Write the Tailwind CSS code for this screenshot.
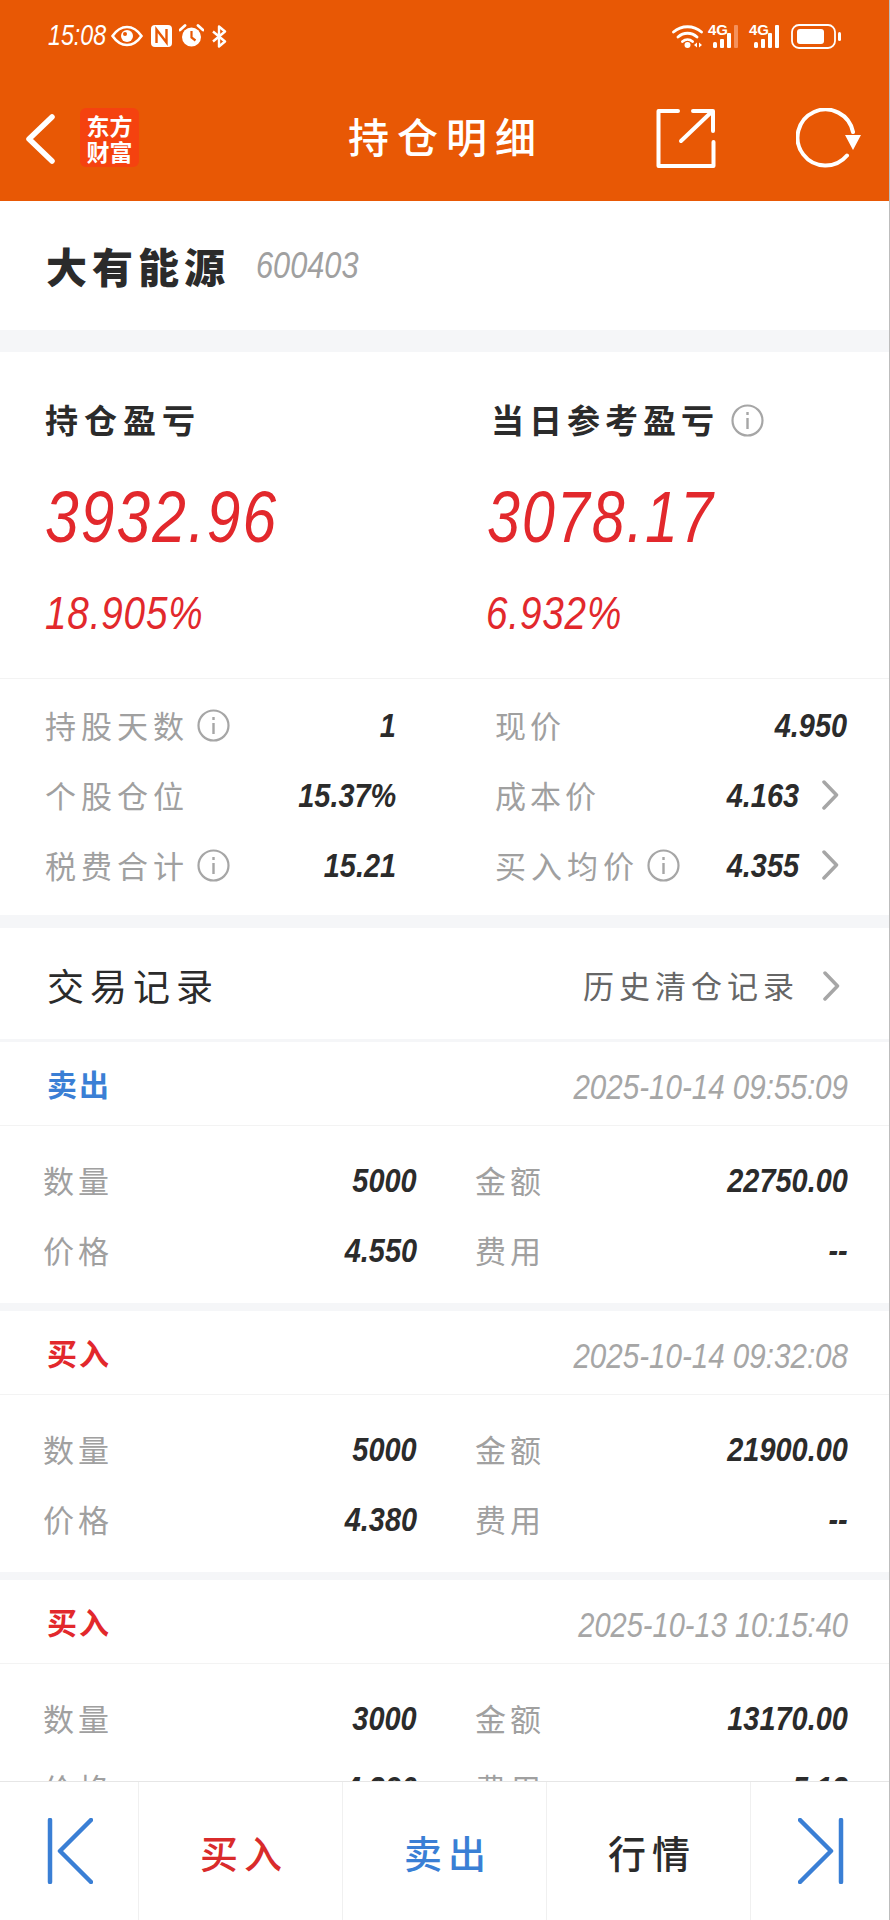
<!DOCTYPE html>
<html lang="zh-CN">
<head>
  <meta charset="UTF-8" />
  <title>持仓明细</title>
  <script src="https://cdn.jsdelivr.net/npm/@tailwindcss/browser@4"></script>
</head>
<body class="bg-white">
<div class="w-[890px] h-[1920px] flex flex-col overflow-hidden bg-white text-[#2b2b2b] border-r border-[#bdbdbd] font-['Noto_Sans_CJK_SC',sans-serif]">

  <!-- header -->
  <header class="h-[201px] shrink-0 bg-[#e85805] text-white flex flex-col">
    <div class="h-[72px] flex items-center pl-[48px] pr-[48px]">
      <span class="w-[60px] text-[29px] italic origin-left scale-x-[.8] font-['Liberation_Sans',sans-serif]">15:08</span>
      <svg class="ml-[3px]" width="32" height="22" viewBox="0 0 32 22" fill="none"><path d="M1.500 11C6 4.500 11 2 16 2s10 2.500 14.500 9C26 17.500 21 20 16 20S6 17.500 1.500 11Z" stroke="#fff" stroke-width="2.600"/><circle cx="16" cy="11" r="6" fill="#fff"/><circle cx="14" cy="9" r="2" fill="#e85805"/></svg>
      <svg class="ml-[8px]" width="21" height="22" viewBox="0 0 21 22" fill="none"><rect width="21" height="22" rx="4" fill="#fff"/><path d="M5.500 18V4.500l10 13V4" stroke="#e85805" stroke-width="2.400"/></svg>
      <svg class="ml-[7px]" width="25" height="24" viewBox="0 0 25 24" fill="none"><circle cx="12.500" cy="13" r="9.500" fill="#fff"/><path d="M12.500 7v6.500l4 3" stroke="#e85805" stroke-width="2.200"/><path d="M1 6l5-4.500M24 6l-5-4.500" stroke="#fff" stroke-width="2.800" stroke-linecap="round"/></svg>
      <svg class="ml-[7px]" width="16" height="23" viewBox="0 0 16 23" fill="none"><path d="M2 6.500l12 10-6 5V1.500l6 5-12 10" stroke="#fff" stroke-width="2.400" stroke-linejoin="round"/></svg>

      <svg class="ml-auto" width="31" height="24" viewBox="0 0 31 24" fill="none"><path d="M1.500 8C9.500 1 21.500 1 29.500 8M6 13c5.500-5 13.500-5 19 0M10.500 17.500c3-2.500 7-2.500 10 0" stroke="#fff" stroke-width="2.800" stroke-linecap="round"/><circle cx="15.500" cy="21" r="3" fill="#fff"/><path d="M22 21l3-2.500V23.500ZM30 21l-3-2.500V23.500Z" fill="#fff"/></svg>
      <div class="ml-[5px] relative w-[34px] h-[24px]">
        <span class="absolute left-0 -top-[3px] text-[15px] font-bold leading-[17px] font-['Liberation_Sans',sans-serif]">4G</span>
        <svg class="absolute left-0 top-0" width="34" height="24" viewBox="0 0 34 24"><g fill="#fff"><rect x="5" y="18" width="4" height="6" rx="1.500"/><rect x="12" y="15" width="4" height="9" rx="1"/><rect x="19" y="9" width="4" height="15" rx="1"/></g><rect x="26" y="1" width="4" height="23" rx="1" fill="#f5915c"/></svg>
      </div>
      <div class="ml-[7px] relative w-[34px] h-[24px]">
        <span class="absolute left-0 -top-[3px] text-[15px] font-bold leading-[17px] font-['Liberation_Sans',sans-serif]">4G</span>
        <svg class="absolute left-0 top-0" width="34" height="24" viewBox="0 0 34 24"><g fill="#fff"><rect x="5" y="18" width="4" height="6" rx="1.500"/><rect x="12" y="15" width="4" height="9" rx="1"/><rect x="19" y="9" width="4" height="15" rx="1"/><rect x="26" y="1" width="4" height="23" rx="1"/></g></svg>
      </div>
      <svg class="ml-[8px]" width="50" height="25" viewBox="0 0 50 25" fill="none"><rect x="1" y="1" width="43" height="23" rx="7" stroke="#fff" stroke-width="1.800"/><rect x="6" y="5" width="27" height="15" rx="3" fill="#fff"/><rect x="47" y="8" width="3" height="9" rx="1.500" fill="#fff"/></svg>
    </div>

    <div class="relative h-[129px] flex items-start pt-[36px]">
      <svg class="ml-[25px] mt-[6px]" width="30" height="50" viewBox="0 0 30 50" fill="none"><path d="M27 3L4 25l23 22" stroke="#fff" stroke-width="5.500" stroke-linecap="round" stroke-linejoin="round"/></svg>
      <div class="ml-[25px] w-[59px] h-[59px] rounded-[6px] bg-[#f5420f] flex flex-col items-center justify-center text-[23px] font-bold">
        <span class="h-[26px] leading-[26px]">东方</span>
        <span class="h-[26px] leading-[26px]">财富</span>
      </div>
      <h1 class="absolute left-[348px] top-[33px] text-[41px] leading-[60px] tracking-[8px] font-medium">持仓明细</h1>
      <svg class="ml-auto" width="60" height="60" viewBox="0 0 60 60" fill="none"><path d="M22 3H2.500v55h55V34M25 33L56 3.500M37 3h20v20" stroke="#fff" stroke-width="4" stroke-linecap="round" stroke-linejoin="round"/></svg>
      <svg class="ml-[80px] mr-[28px]" width="65" height="60" viewBox="0 0 65 60" fill="none"><path d="M57 24A28 28 0 1 0 51 47.500" stroke="#fff" stroke-width="4" stroke-linecap="round"/><path d="M49 27h16l-8 15Z" fill="#fff"/></svg>
    </div>
  </header>

  <!-- stock name -->
  <section class="h-[129px] shrink-0 flex items-center pl-[46px]">
    <span class="text-[41px] leading-none font-black tracking-[5px]">大有能源</span>
    <span class="ml-[26px] text-[37px] italic origin-left scale-x-[.83] text-[#a0a0a0] font-['Liberation_Sans',sans-serif]">600403</span>
  </section>
  <div class="h-[22px] shrink-0 bg-[#f5f6f8]"></div>

  <!-- profit summary -->
  <section class="shrink-0 h-[327px] grid grid-cols-[446px_1fr] pl-[45px] pt-[44px] border-b border-[#f3f3f3]">
    <div>
      <div class="h-[48px] flex items-center text-[33px] font-bold tracking-[6px]">持仓盈亏</div>
      <div class="mt-[25px] h-[96px] flex items-center origin-left scale-x-[.84] text-[72px] tracking-[2.500px] italic text-[#e2282c] font-['Liberation_Sans',sans-serif]">3932.96</div>
      <div class="mt-[18px] h-[60px] flex items-center origin-left scale-x-[.84] text-[46px] tracking-[1px] italic text-[#e2282c] font-['Liberation_Sans',sans-serif]">18.905%</div>
    </div>
    <div>
      <div class="h-[48px] flex items-center text-[33px] font-bold tracking-[5px]">当日参考盈亏
        <svg class="ml-[12px]" width="33" height="33" viewBox="0 0 33 33" fill="none"><circle cx="16.500" cy="16.500" r="15" stroke="#a6a6a6" stroke-width="2.200"/><path d="M16.500 14v11M16.500 8v3" stroke="#a6a6a6" stroke-width="2.400"/></svg>
      </div>
      <div class="-ml-[4px] mt-[25px] h-[96px] flex items-center origin-left scale-x-[.82] text-[72px] tracking-[2.500px] italic text-[#e2282c] font-['Liberation_Sans',sans-serif]">3078.17</div>
      <div class="-ml-[5px] mt-[18px] h-[60px] flex items-center origin-left scale-x-[.84] text-[46px] tracking-[1px] italic text-[#e2282c] font-['Liberation_Sans',sans-serif]">6.932%</div>
    </div>
  </section>

  <!-- position stats -->
  <section class="shrink-0 h-[236px] pt-[11px] pl-[45px] pr-[42px] grid grid-cols-[351px_1fr] gap-x-[99px] auto-rows-[70px] text-[#a0a0a0]">
    <div class="flex items-center">
      <span class="text-[31px] tracking-[5px]">持股天数</span>
      <svg class="ml-[8px]" width="33" height="33" viewBox="0 0 33 33" fill="none"><circle cx="16.500" cy="16.500" r="15" stroke="#a6a6a6" stroke-width="2.200"/><path d="M16.500 14v11M16.500 8v3" stroke="#a6a6a6" stroke-width="2.400"/></svg>
      <span class="ml-auto text-[34px] italic font-bold origin-right scale-x-[.85] text-[#2b2b2b] font-['Liberation_Sans',sans-serif]">1</span>
    </div>
    <div class="flex items-center">
      <span class="text-[31px] tracking-[4px]">现价</span>
      <span class="ml-auto text-[34px] italic font-bold origin-right scale-x-[.85] text-[#2b2b2b] font-['Liberation_Sans',sans-serif]">4.950</span>
    </div>
    <div class="flex items-center">
      <span class="text-[31px] tracking-[5px]">个股仓位</span>
      <span class="ml-auto text-[34px] italic font-bold origin-right scale-x-[.85] text-[#2b2b2b] font-['Liberation_Sans',sans-serif]">15.37%</span>
    </div>
    <div class="flex items-center">
      <span class="text-[31px] tracking-[4px]">成本价</span>
      <span class="ml-auto text-[34px] italic font-bold origin-right scale-x-[.85] text-[#2b2b2b] font-['Liberation_Sans',sans-serif]">4.163</span>
      <svg class="ml-[23px] mr-[8px]" width="17" height="30" viewBox="0 0 17 30" fill="none"><path d="M2 2l12.500 13L2 28" stroke="#a6a6a6" stroke-width="3.500" stroke-linecap="round" stroke-linejoin="round"/></svg>
    </div>
    <div class="flex items-center">
      <span class="text-[31px] tracking-[5px]">税费合计</span>
      <svg class="ml-[8px]" width="33" height="33" viewBox="0 0 33 33" fill="none"><circle cx="16.500" cy="16.500" r="15" stroke="#a6a6a6" stroke-width="2.200"/><path d="M16.500 14v11M16.500 8v3" stroke="#a6a6a6" stroke-width="2.400"/></svg>
      <span class="ml-auto text-[34px] italic font-bold origin-right scale-x-[.85] text-[#2b2b2b] font-['Liberation_Sans',sans-serif]">15.21</span>
    </div>
    <div class="flex items-center">
      <span class="text-[31px] tracking-[5px]">买入均价</span>
      <svg class="ml-[8px]" width="33" height="33" viewBox="0 0 33 33" fill="none"><circle cx="16.500" cy="16.500" r="15" stroke="#a6a6a6" stroke-width="2.200"/><path d="M16.500 14v11M16.500 8v3" stroke="#a6a6a6" stroke-width="2.400"/></svg>
      <span class="ml-auto text-[34px] italic font-bold origin-right scale-x-[.85] text-[#2b2b2b] font-['Liberation_Sans',sans-serif]">4.355</span>
      <svg class="ml-[23px] mr-[8px]" width="17" height="30" viewBox="0 0 17 30" fill="none"><path d="M2 2l12.500 13L2 28" stroke="#a6a6a6" stroke-width="3.500" stroke-linecap="round" stroke-linejoin="round"/></svg>
    </div>
  </section>
  <div class="h-[13px] shrink-0 bg-[#f5f6f8]"></div>

  <!-- trade records, clipped by the bottom bar -->
  <main class="flex-1 min-h-0 overflow-hidden">
    <div class="h-[114px] flex items-center pl-[47px] pr-[49px] border-b-[3px] border-[#f5f6f8]">
      <span class="mt-[4px] text-[37px] tracking-[6px]">交易记录</span>
      <span class="mt-[4px] ml-auto text-[31px] tracking-[5px] text-[#666]">历史清仓记录</span>
      <svg class="ml-[24px] mt-[4px]" width="17" height="30" viewBox="0 0 17 30" fill="none"><path d="M2 2l12.500 13L2 28" stroke="#a6a6a6" stroke-width="3.500" stroke-linecap="round" stroke-linejoin="round"/></svg>
    </div>

    <article class="border-b-[8px] border-[#f5f6f8]">
      <div class="h-[84px] flex items-center pl-[47px] pr-[41px] border-b border-[#f3f3f3]">
        <span class="text-[30px] font-bold tracking-[2px] text-[#3a7fd5]">卖出</span>
        <span class="mt-[8px] ml-auto text-[35px] italic origin-right scale-x-[.845] text-[#a6a6a6] font-['Liberation_Sans',sans-serif]">2025-10-14 09:55:09</span>
      </div>
      <div class="pt-[19px] pb-[18px] pl-[43px] pr-[41px] grid grid-cols-[374px_1fr] gap-x-[58px] auto-rows-[70px]">
        <div class="flex items-center"><span class="text-[31px] tracking-[4px] text-[#a0a0a0]">数量</span><span class="ml-auto text-[34px] italic font-bold origin-right scale-x-[.85] font-['Liberation_Sans',sans-serif]">5000</span></div>
        <div class="flex items-center"><span class="text-[31px] tracking-[4px] text-[#a0a0a0]">金额</span><span class="ml-auto text-[34px] italic font-bold origin-right scale-x-[.85] font-['Liberation_Sans',sans-serif]">22750.00</span></div>
        <div class="flex items-center"><span class="text-[31px] tracking-[4px] text-[#a0a0a0]">价格</span><span class="ml-auto text-[34px] italic font-bold origin-right scale-x-[.85] font-['Liberation_Sans',sans-serif]">4.550</span></div>
        <div class="flex items-center"><span class="text-[31px] tracking-[4px] text-[#a0a0a0]">费用</span><span class="ml-auto text-[34px] italic font-bold origin-right scale-x-[.85] font-['Liberation_Sans',sans-serif]">--</span></div>
      </div>
    </article>

    <article class="border-b-[8px] border-[#f5f6f8]">
      <div class="h-[84px] flex items-center pl-[47px] pr-[41px] border-b border-[#f3f3f3]">
        <span class="text-[30px] font-bold tracking-[2px] text-[#e2282c]">买入</span>
        <span class="mt-[8px] ml-auto text-[35px] italic origin-right scale-x-[.845] text-[#a6a6a6] font-['Liberation_Sans',sans-serif]">2025-10-14 09:32:08</span>
      </div>
      <div class="pt-[19px] pb-[18px] pl-[43px] pr-[41px] grid grid-cols-[374px_1fr] gap-x-[58px] auto-rows-[70px]">
        <div class="flex items-center"><span class="text-[31px] tracking-[4px] text-[#a0a0a0]">数量</span><span class="ml-auto text-[34px] italic font-bold origin-right scale-x-[.85] font-['Liberation_Sans',sans-serif]">5000</span></div>
        <div class="flex items-center"><span class="text-[31px] tracking-[4px] text-[#a0a0a0]">金额</span><span class="ml-auto text-[34px] italic font-bold origin-right scale-x-[.85] font-['Liberation_Sans',sans-serif]">21900.00</span></div>
        <div class="flex items-center"><span class="text-[31px] tracking-[4px] text-[#a0a0a0]">价格</span><span class="ml-auto text-[34px] italic font-bold origin-right scale-x-[.85] font-['Liberation_Sans',sans-serif]">4.380</span></div>
        <div class="flex items-center"><span class="text-[31px] tracking-[4px] text-[#a0a0a0]">费用</span><span class="ml-auto text-[34px] italic font-bold origin-right scale-x-[.85] font-['Liberation_Sans',sans-serif]">--</span></div>
      </div>
    </article>

    <article>
      <div class="h-[84px] flex items-center pl-[47px] pr-[41px] border-b border-[#f3f3f3]">
        <span class="text-[30px] font-bold tracking-[2px] text-[#e2282c]">买入</span>
        <span class="mt-[8px] ml-auto text-[35px] italic origin-right scale-x-[.83] text-[#a6a6a6] font-['Liberation_Sans',sans-serif]">2025-10-13 10:15:40</span>
      </div>
      <div class="pt-[19px] pb-[18px] pl-[43px] pr-[41px] grid grid-cols-[374px_1fr] gap-x-[58px] auto-rows-[70px]">
        <div class="flex items-center"><span class="text-[31px] tracking-[4px] text-[#a0a0a0]">数量</span><span class="ml-auto text-[34px] italic font-bold origin-right scale-x-[.85] font-['Liberation_Sans',sans-serif]">3000</span></div>
        <div class="flex items-center"><span class="text-[31px] tracking-[4px] text-[#a0a0a0]">金额</span><span class="ml-auto text-[34px] italic font-bold origin-right scale-x-[.85] font-['Liberation_Sans',sans-serif]">13170.00</span></div>
        <div class="flex items-center"><span class="text-[31px] tracking-[4px] text-[#a0a0a0]">价格</span><span class="ml-auto text-[34px] italic font-bold origin-right scale-x-[.85] font-['Liberation_Sans',sans-serif]">4.390</span></div>
        <div class="flex items-center"><span class="text-[31px] tracking-[4px] text-[#a0a0a0]">费用</span><span class="ml-auto text-[34px] italic font-bold origin-right scale-x-[.85] font-['Liberation_Sans',sans-serif]">5.13</span></div>
      </div>
    </article>
  </main>

  <!-- bottom bar -->
  <nav class="h-[139px] shrink-0 bg-white border-t border-[#e6e6e6] grid grid-cols-[139px_204px_204px_204px_1fr] divide-x divide-[#f0f0f0]">
    <div class="flex items-center pl-[47px]">
      <svg width="46" height="66" viewBox="0 0 46 66" fill="none"><path d="M3 2v62M44 2L13 33l31 31" stroke="#3a7fd5" stroke-width="4.500" stroke-linecap="round" stroke-linejoin="round"/></svg>
    </div>
    <div class="flex items-center justify-center pl-[7px] text-[38px] font-medium tracking-[6px] text-[#d92b2b]">买入</div>
    <div class="flex items-center justify-center pl-[7px] text-[38px] font-medium tracking-[6px] text-[#3a7fd5]">卖出</div>
    <div class="flex items-center justify-center pl-[7px] text-[38px] font-medium tracking-[6px] text-[#2b2b2b]">行情</div>
    <div class="flex items-center pl-[47px]">
      <svg width="46" height="66" viewBox="0 0 46 66" fill="none"><path d="M43 2v62M2 2l31 31L2 64" stroke="#3a7fd5" stroke-width="4.500" stroke-linecap="round" stroke-linejoin="round"/></svg>
    </div>
  </nav>
</div>
</body>
</html>
